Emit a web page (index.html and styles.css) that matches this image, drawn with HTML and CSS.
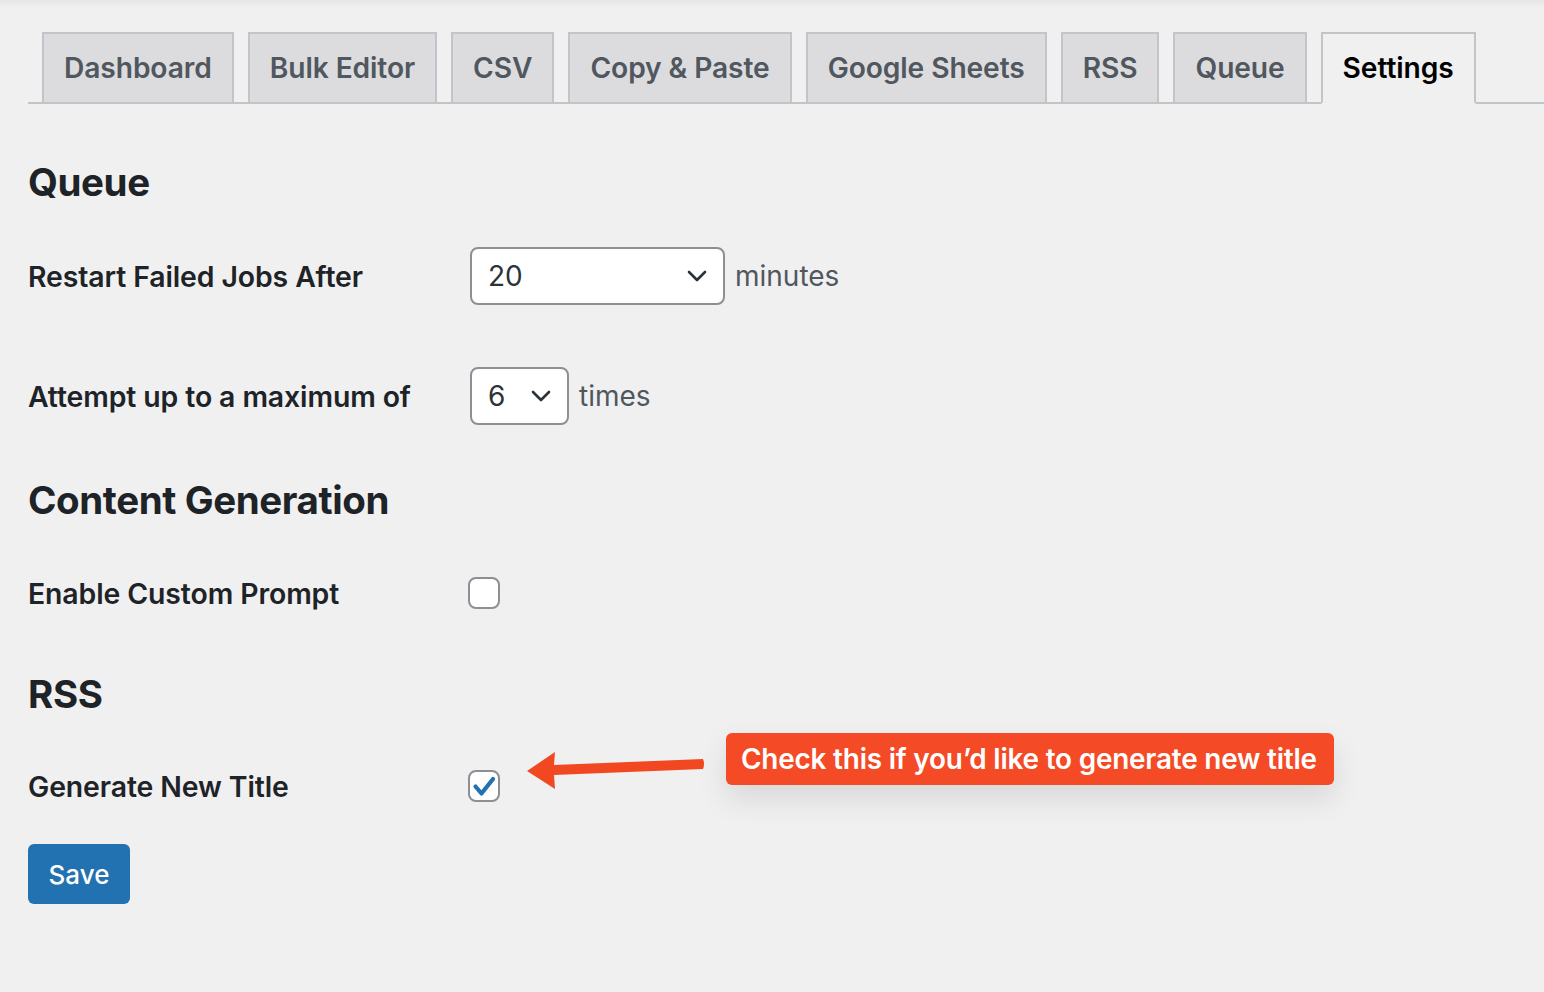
FILE: index.html
```html
<!DOCTYPE html>
<html>
<head>
<meta charset="utf-8">
<link rel="stylesheet" href="styles.css">
</head>
<body>
<div class="wrap">
  <nav class="tabs">
    <a class="tab">Dashboard</a>
    <a class="tab">Bulk Editor</a>
    <a class="tab">CSV</a>
    <a class="tab">Copy &amp; Paste</a>
    <a class="tab">Google Sheets</a>
    <a class="tab">RSS</a>
    <a class="tab">Queue</a>
    <a class="tab active">Settings</a>
  </nav>

  <h2 class="heading first">Queue</h2>
  <div class="row">
    <div class="label">Restart Failed Jobs After</div>
    <div class="field">
      <div class="select wide"><span>20</span><svg class="chev" viewBox="0 0 20 12" width="20" height="12"><path d="M2 2 L10 10 L18 2" fill="none" stroke="#2c3338" stroke-width="2.6" stroke-linecap="round" stroke-linejoin="round"/></svg></div>
      <span class="unit">minutes</span>
    </div>
  </div>
  <div class="row second">
    <div class="label">Attempt up to a maximum of</div>
    <div class="field">
      <div class="select narrow"><span>6</span><svg class="chev" viewBox="0 0 20 12" width="20" height="12"><path d="M2 2 L10 10 L18 2" fill="none" stroke="#2c3338" stroke-width="2.6" stroke-linecap="round" stroke-linejoin="round"/></svg></div>
      <span class="unit">times</span>
    </div>
  </div>

  <h2 class="heading">Content Generation</h2>
  <div class="row">
    <div class="label">Enable Custom Prompt</div>
    <div class="field"><span class="checkbox"></span></div>
  </div>

  <h2 class="heading rss">RSS</h2>
  <div class="row">
    <div class="label">Generate New Title</div>
    <div class="field"><span class="checkbox checked"><svg viewBox="0 0 30 30" width="30" height="30"><path d="M6.5 15.5 L12.5 22.5 L24 8" fill="none" stroke="#2271b1" stroke-width="4.2" stroke-linecap="round" stroke-linejoin="round"/></svg></span></div>
  </div>

  <button class="save">Save</button>
</div>

<svg class="arrow" width="200" height="60" viewBox="0 0 200 60">
  <path d="M8 26 L36 7 L35 20 L184 14 Q186 19 184 24 L35 30 L36 44 Z" fill="#f24822"/>
</svg>
<div class="note">Check this if you’d like to generate new title</div>
</body>
</html>
```

FILE: styles.css
```css
html, body {
  margin: 0;
  padding: 0;
}
body {
  background: #f0f0f1;
  background-image: linear-gradient(to bottom, #e6e6e7 0, #f0f0f1 8px);
  background-repeat: no-repeat;
  font-family: Inter, "Noto Sans", "Liberation Sans", sans-serif;
  color: #1d2327;
  width: 1544px;
  height: 992px;
  position: relative;
  overflow: hidden;
}
.wrap {
  padding: 32px 0 0 28px;
}
.tabs {
  display: flex;
  gap: 14px;
  padding-left: 14px;
  border-bottom: 2px solid #c3c4c7;
  height: 70px;
  align-items: flex-end;
}
.tab {
  display: block;
  box-sizing: border-box;
  height: 72px;
  margin-bottom: -2px;
  padding: 0 20px;
  line-height: 68px;
  font-size: 28.2px;
  font-weight: 600;
  color: #50575e;
  background: #dcdcde;
  border: 2px solid #c3c4c7;
  letter-spacing: -0.1px;
  white-space: nowrap;
}
.tab.active {
  background: #f0f0f1;
  color: #000;
  border-bottom-color: #f0f0f1;
}
.heading {
  margin: 42px 0 31px;
  font-size: 38.5px;
  line-height: 44px;
  font-weight: 700;
  color: #1d2327;
  letter-spacing: -0.4px;
}
.heading.first {
  margin-top: 56px;
  margin-bottom: 32px;
}
.heading.rss {
  margin-top: 39px;
  margin-bottom: 30px;
}
.row {
  display: flex;
  align-items: center;
  height: 80px;
}
.row.second {
  margin-top: 40px;
}
.label {
  width: 441px;
  font-size: 28.4px;
  font-weight: 600;
  color: #1d2327;
  letter-spacing: -0.1px;
}
.field {
  display: flex;
  align-items: center;
  gap: 10px;
}
.select {
  box-sizing: border-box;
  height: 58px;
  border: 2px solid #8c8f94;
  border-radius: 8px;
  background: #fff;
  display: flex;
  align-items: center;
  justify-content: space-between;
  padding: 0 16px 0 16px;
  font-size: 28px;
  color: #2c3338;
  margin-left: 1px;
}
.select.wide { width: 255px; }
.select.narrow { width: 99px; }
.chev { display: block; }
.unit {
  font-size: 28px;
  color: #50575e;
}
.checkbox {
  box-sizing: border-box;
  width: 32px;
  height: 32px;
  margin-left: -1px;
  border: 2px solid #8c8f94;
  border-radius: 8px;
  background: #fff;
  display: flex;
  align-items: center;
  justify-content: center;
}
.checkbox svg { display: block; flex: none; }
.save {
  margin-top: 18px;
  width: 102px;
  height: 60px;
  border: 0;
  border-radius: 6px;
  background: #2271b1;
  color: #fff;
  font-family: Inter, "Noto Sans", "Liberation Sans", sans-serif;
  font-size: 26px;
  font-weight: 500;
  padding: 0;
}
.arrow {
  position: absolute;
  left: 519px;
  top: 745px;
}
.note {
  position: absolute;
  left: 726px;
  top: 733px;
  width: 608px;
  height: 52px;
  box-sizing: border-box;
  background: #f44a25;
  border-radius: 6px;
  color: #fff;
  font-size: 27.9px;
  font-weight: 600;
  line-height: 52px;
  padding-left: 15px;
  white-space: nowrap;
  letter-spacing: -0.2px;
  box-shadow: 0 14px 30px rgba(0,0,0,0.10);
}
```
